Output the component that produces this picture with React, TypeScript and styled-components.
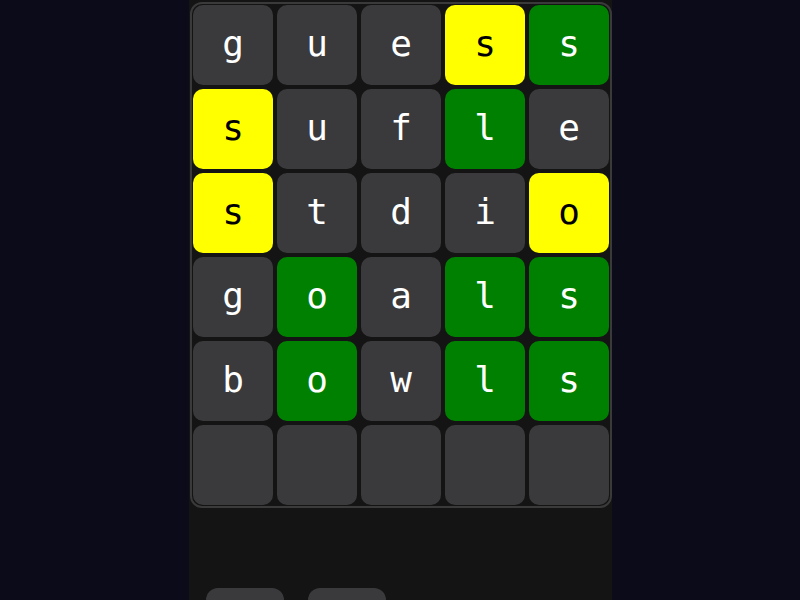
import React from "react";
import styled, { createGlobalStyle } from "styled-components";

const Global = createGlobalStyle`
  html, body { margin: 0; padding: 0; background: #0b0b1a; height: 100%; }
  #root { height: 100%; }
`;

const Column = styled.div`
  width: 423px;
  height: 600px;
  margin-left: calc(50% - 211px);
  background: #141414;
  display: flex;
  flex-direction: column;
  align-items: flex-end;
  padding-top: 2px;
  box-sizing: border-box;
  overflow: hidden;
  font-family: "DejaVu Sans Mono", monospace;
`;

const Board = styled.div`
  display: grid;
  grid-template-columns: repeat(5, 80px);
  grid-auto-rows: 80px;
  gap: 4px;
  padding: 1px;
  border: 2px solid #3a3a3a;
  border-radius: 12px;
  background: #141414;
`;

type Kind = "empty" | "absent" | "present" | "correct";

const bg: Record<Kind, string> = {
  empty: "#3a393c",
  absent: "#3a393c",
  present: "#ffff00",
  correct: "#008000",
};

const Tile = styled.div<{ $kind: Kind }>`
  background: ${(p) => bg[p.$kind]};
  color: ${(p) => (p.$kind === "present" ? "#000" : "#fff")};
  border-radius: 10px;
  display: flex;
  align-items: center;
  justify-content: center;
  font-size: 36px;
  line-height: 1;
  padding-bottom: 2px;
  box-sizing: border-box;
`;

const Controls = styled.div`
  margin-top: 80px;
  width: 100%;
  display: flex;
  gap: 24px;
  padding-left: 17px;
  box-sizing: border-box;
`;

const Key = styled.div`
  width: 78px;
  height: 40px;
  background: #3a393c;
  border-radius: 12px;
`;

const rows: [string, Kind][][] = [
  [["g", "absent"], ["u", "absent"], ["e", "absent"], ["s", "present"], ["s", "correct"]],
  [["s", "present"], ["u", "absent"], ["f", "absent"], ["l", "correct"], ["e", "absent"]],
  [["s", "present"], ["t", "absent"], ["d", "absent"], ["i", "absent"], ["o", "present"]],
  [["g", "absent"], ["o", "correct"], ["a", "absent"], ["l", "correct"], ["s", "correct"]],
  [["b", "absent"], ["o", "correct"], ["w", "absent"], ["l", "correct"], ["s", "correct"]],
  [["", "empty"], ["", "empty"], ["", "empty"], ["", "empty"], ["", "empty"]],
];

export default function App() {
  return (
    <>
      <Global />
      <Column>
        <Board>
          {rows.flatMap((r, i) =>
            r.map(([ch, k], j) => (
              <Tile key={`${i}-${j}`} $kind={k}>
                {ch}
              </Tile>
            ))
          )}
        </Board>
        <Controls>
          <Key />
          <Key />
        </Controls>
      </Column>
    </>
  );
}
